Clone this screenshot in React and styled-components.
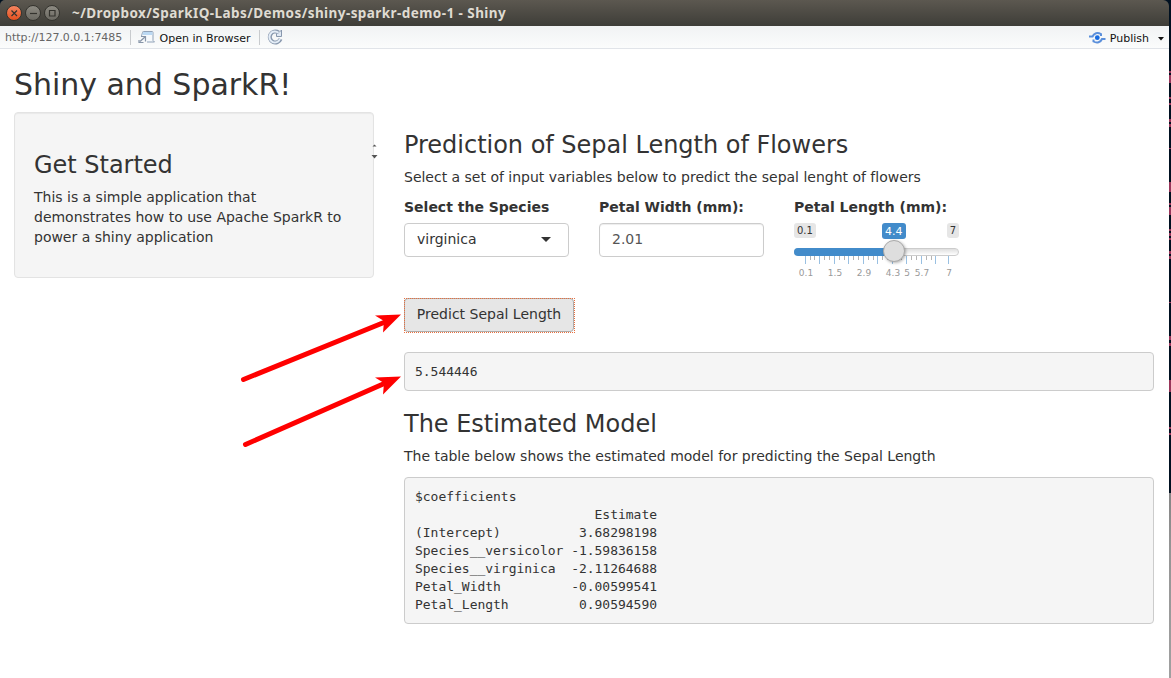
import React from 'react';
import styled, { createGlobalStyle } from 'styled-components';

const Global = createGlobalStyle`
  * { box-sizing: border-box; }
  body { margin: 0; overflow: hidden; background: #fff; }
`;

const Desktop = styled.div`
  display: flex;
  height: 678px;
  width: 1171px;
  position: relative;
  background: #001020;
  font-family: 'DejaVu Sans', sans-serif;
  font-size: 14px;
  line-height: 20px;
  color: #333;
`;

const AppWindow = styled.div`
  width: 1169px;
  height: 678px;
  display: flex;
  flex-direction: column;
`;

const Behind = styled.div`
  width: 2px;
  display: flex;
  flex-direction: column;
`;

const Editor = styled.div`
  flex: none;
  height: 493px;
`;

const Panel = styled.div`
  flex: 1;
  background: linear-gradient(#858585, #959595 30%, #a0a0a0);
`;

const TitleBar = styled.header`
  height: 26px;
  flex: none;
  display: flex;
  align-items: center;
  padding-left: 6px;
  background: linear-gradient(#5c5850, #3e3d38);
  border-radius: 5px 6px 0 0;
`;

const WindowButton = styled.span`
  width: 16px;
  height: 16px;
  margin-right: 3px;
  border-radius: 50%;
  display: flex;
  border: 1px solid #35342f;
  background: ${(p) => (p.$close ? 'linear-gradient(#f58560, #e4501f)' : 'linear-gradient(#8d8a82, #6b6962)')};
`;

const WindowTitle = styled.h1`
  margin: 0 0 0 9px;
  font: bold 13.5px/26px 'Noto Sans', sans-serif;
  letter-spacing: 0.43px;
  color: #dfdbd2;
  white-space: nowrap;
`;

const Toolbar = styled.nav`
  height: 23px;
  flex: none;
  display: flex;
  align-items: center;
  padding: 0 5px;
  font-size: 11px;
  line-height: 20px;
  color: #111;
  white-space: nowrap;
  background: linear-gradient(#f1f3f4, #fbfcfc);
  border-bottom: 1px solid #e1e4e9;
`;

const Address = styled.span`
  color: #666;
  width: 125px;
  padding-top: 2px;
  letter-spacing: -0.03px;
`;

const Divider = styled.i`
  width: 1px;
  height: 15px;
  background: #c8cbce;
`;

const ToolButton = styled.span`
  display: flex;
  align-items: center;
  gap: ${(p) => p.$gap || 0}px;
  padding-left: ${(p) => p.$pad || 0}px;
  padding-right: ${(p) => p.$end || 0}px;
  margin-left: ${(p) => (p.$right ? 'auto' : 0)};
`;

const ToolLabel = styled.span`
  padding-top: 3px;
`;

const Page = styled.main`
  flex: 1;
  background: #fff;
  padding: 19px 15px 0 14px;
`;

const PageTitle = styled.h2`
  margin: 0 0 11px;
  font-size: 30px;
  font-weight: 400;
  line-height: 33px;
  letter-spacing: -0.03px;
`;

const Columns = styled.div`
  display: flex;
  align-items: flex-start;
  gap: 30px;
`;

const Well = styled.aside`
  width: 360px;
  position: relative;
  padding: 19px;
  border: 1px solid #e3e3e3;
  border-radius: 4px;
  background: #f5f5f5;
  box-shadow: inset 0 1px 1px rgba(0, 0, 0, 0.05);
`;

const Spinner = styled.svg`
  position: absolute;
  left: 356px;
  top: 30px;
`;

const Main = styled.section`
  width: 750px;
`;

const Heading = styled.h3`
  margin: 20px 0 9px;
  font-size: 24px;
  font-weight: 400;
  line-height: 26.4px;
  letter-spacing: -0.02px;
`;

const Text = styled.p`
  margin: 0 0 ${(p) => p.$gap || 11}px;
  letter-spacing: -0.01px;
`;

const Inputs = styled.div`
  display: flex;
  gap: 30px;
  height: 100.6px;
`;

const Field = styled.div`
  width: 165px;
  display: flex;
  flex-direction: column;
  gap: 6px;
`;

const Label = styled.label`
  font-weight: 700;
  white-space: nowrap;
  line-height: 20px;
`;

const Control = styled.div`
  height: 34px;
  display: flex;
  align-items: center;
  justify-content: space-between;
  padding: 0 17px 2px 12px;
  border: 1px solid #ccc;
  border-radius: 4px;
  color: ${(p) => (p.$input ? '#555' : '#333')};
  box-shadow: ${(p) => (p.$input ? 'inset 0 1px 1px rgba(0,0,0,.075)' : 'none')};
`;

const Caret = styled.i`
  border: 5px solid transparent;
  border-top-color: #333;
  border-bottom: 0;
  margin-top: 1px;
`;

const Slider = styled.div`
  display: flex;
  flex-direction: column;
  position: relative;
`;

const Badges = styled.div`
  display: flex;
  justify-content: space-between;
  height: 17px;
  align-items: flex-start;
  font-size: 10px;
  line-height: 15px;
`;

const Badge = styled.span`
  padding: 0 3px;
  height: 15px;
  border-radius: 3px;
  background: #e6e6e6;
`;

const ValueBadge = styled(Badge)`
  position: absolute;
  left: 88px;
  top: 0;
  height: 16px;
  font-size: 11px;
  line-height: 17px;
  background: #428bca;
  color: #fff;
`;

const Track = styled.div`
  height: 8px;
  margin-top: 8px;
  border: 1px solid #ccc;
  border-radius: 8px;
  background: linear-gradient(#dedede, #fff) padding-box;
`;

const Filled = styled.div`
  width: 100px;
  height: 8px;
  margin: -1px;
  border-radius: 8px 0 0 8px;
  background: #428bca;
`;

const Knob = styled.i`
  position: absolute;
  left: 89px;
  top: 17px;
  width: 22px;
  height: 22px;
  border: 1px solid #aaa;
  border-radius: 50%;
  background: #dedede;
  box-shadow: 1px 1px 3px rgba(0, 0, 0, 0.3);
`;

const Scale = styled.svg`
  display: block;
  overflow: visible;
  font: 9px 'DejaVu Sans', sans-serif;
  fill: #999;
  text-anchor: middle;
`;

const Button = styled.button`
  display: block;
  position: relative;
  width: 170px;
  height: 34px;
  padding: 0 0 2px;
  font: inherit;
  color: #333;
  white-space: nowrap;
  background: #e6e6e6;
  border: 1px solid #adadad;
  border-radius: 4px;

  &::after {
    content: '';
    position: absolute;
    inset: -1px -2px -2px -1px;
    border: 1px dotted #e8703f;
  }
`;

const Pre = styled.pre`
  margin: ${(p) => p.$top || 0}px 0 20px;
  padding: 9.5px 10px;
  font: 13px/18px 'DejaVu Sans Mono', monospace;
  letter-spacing: -0.02px;
  background: #f5f5f5;
  border: 1px solid #ccc;
  border-radius: 4px;
`;

const Overlay = styled.svg`
  position: absolute;
  inset: 0;
  pointer-events: none;
`;

const majors = [11.5, 25.5, 40.5, 54.5, 69.5, 83.5, 98.5, 112.5, 127.5, 141.5, 154.5];
const minors = [16, 20, 30, 35, 45, 50, 59, 64, 74, 79, 88, 93, 103, 107, 117, 122, 132, 137];
const tickLabels = [[12, '0.1'], [41, '1.5'], [70, '2.9'], [99, '4.3'], [113, '5'], [128, '5.7'], [155, '7']];
const edges = [
  [71, 2], [75, 8], [97, 2], [103, 2], [119, 3], [124, 3], [148, 1], [182, 10], [203, 2], [207, 8],
  [229, 2], [233, 3], [238, 2], [251, 3], [256, 3], [302, 1], [336, 4], [343, 3], [380, 12], [427, 2], [433, 2],
];

const results = `$coefficients
                       Estimate
(Intercept)          3.68298198
Species__versicolor -1.59836158
Species__virginica  -2.11264688
Petal_Width         -0.00599541
Petal_Length         0.90594590`;

const Glyph = ({ d }) => (
  <svg width="14" height="14" viewBox="0 0 14 14" fill="none" stroke="#34332e" strokeWidth="1.2">
    <path d={d} />
  </svg>
);

export default function App() {
  return (
    <Desktop>
      <Global />
      <AppWindow>
        <TitleBar>
          <WindowButton $close><Glyph d="M4.500 4.500l5.500 5.500m0-5.500l-5.500 5.500" /></WindowButton>
          <WindowButton><Glyph d="M4 7.500h7" /></WindowButton>
          <WindowButton><Glyph d="M4.500 4.500h5.500v5.500h-5.500z" /></WindowButton>
          <WindowTitle>~/Dropbox/SparkIQ-Labs/Demos/shiny-sparkr-demo-1 - Shiny</WindowTitle>
        </TitleBar>
        <Toolbar>
          <Address>http://127.0.0.1:7485</Address>
          <Divider />
          <ToolButton $pad={7} $gap={3.5} $end={8.5}>
            <svg width="18" height="14" viewBox="0 0 18 14" fill="none">
              <path d="M3.500 6L4.500 2.500q0-1 1-1h8.500q1 0 1 1V10.500l1.500 1.500H9" fill="#f6f9fc" stroke="#91a2b8" />
              <path d="M5 2h9.500v3H4.500z" fill="#bcd9f3" />
              <path d="M3 6.500h4.500v5M7.500 6.500L2 11.500M1 10v2.500h4.500" stroke="#8795a8" strokeWidth="1.2" />
            </svg>
            <ToolLabel>Open in Browser</ToolLabel>
          </ToolButton>
          <Divider />
          <ToolButton $pad={7}>
            <svg width="17" height="16" viewBox="0 0 17 16" fill="none">
              <path d="M11.500 3.500A5.500 5.500 0 1 0 13.500 10" stroke="#8797ad" strokeWidth="4" />
              <path d="M9.500 7.500V5L12 3.500L14.500 1V7.500z" fill="#dfe8f3" stroke="#8797ad" />
              <path d="M11.500 3.800A5.500 5.500 0 1 0 13 10" stroke="#e4edf7" strokeWidth="2" />
            </svg>
          </ToolButton>
          <ToolButton $right $gap={4}>
            <svg width="17" height="14" viewBox="0 0 17 14" fill="none" stroke="#5a8fdb" strokeWidth="2">
              <path d="M0 6.500H3.500C5 3 8.500 2 12 4v2M16.500 9H13C11.500 12.500 8 13.500 4.500 11.500V9.500" />
              <circle cx="8.300" cy="7.700" r="2.400" fill="#176be0" stroke="none" />
            </svg>
            <ToolLabel>Publish</ToolLabel>
            <svg width="6" height="4" style={{ marginLeft: 5, marginTop: 3 }}><path d="M0 0h6L3 3.500z" fill="#111" /></svg>
          </ToolButton>
        </Toolbar>
        <Page>
          <PageTitle>Shiny and SparkR!</PageTitle>
          <Columns>
            <Well>
              <Heading>Get Started</Heading>
              <Text>This is a simple application that demonstrates how to use Apache SparkR to power a shiny application</Text>
              <Spinner width="8" height="18" fill="#555"><path d="M1.500 3.500h4L3.500 1.500zM0.500 12h6l-3 3.500z" /></Spinner>
            </Well>
            <Main>
              <Heading>Prediction of Sepal Length of Flowers</Heading>
              <Text $gap={10}>Select a set of input variables below to predict the sepal lenght of flowers</Text>
              <Inputs>
                <Field>
                  <Label>Select the Species</Label>
                  <Control>virginica<Caret /></Control>
                </Field>
                <Field>
                  <Label>Petal Width (mm):</Label>
                  <Control $input>2.01</Control>
                </Field>
                <Field>
                  <Label>Petal Length (mm):</Label>
                  <Slider>
                    <Badges><Badge>0.1</Badge><Badge>7</Badge></Badges>
                    <ValueBadge>4.4</ValueBadge>
                    <Track><Filled /></Track>
                    <Scale width="165" height="24">
                      {minors.map((x) => <rect key={x} x={x} y="0" width="1" height="4" fill="#b5b5b5" />)}
                      {majors.map((x) => <rect key={x} x={x - 0.5} y="0" width="1" height="8" fill="#99c0e2" />)}
                      {tickLabels.map(([x, t]) => <text key={t} x={x} y="20">{t}</text>)}
                    </Scale>
                    <Knob />
                  </Slider>
                </Field>
              </Inputs>
              <Button>Predict Sepal Length</Button>
              <Pre $top={20}>5.544446</Pre>
              <Heading>The Estimated Model</Heading>
              <Text>The table below shows the estimated model for predicting the Sepal Length</Text>
              <Pre>{results}</Pre>
            </Main>
          </Columns>
        </Page>
      </AppWindow>
      <Behind>
        <Editor>
          <svg width="2" height="493" style={{ display: 'block' }}>
            {edges.map(([y, h]) => <rect key={y} x="0" y={y} width="2" height={h} fill="#98365a" />)}
          </svg>
        </Editor>
        <Panel />
      </Behind>
      <Overlay width="1171" height="678" fill="#f00" stroke="#f00">
        <path d="M243.500 379.500L390 320M245.500 444.500L390 381" strokeWidth="5" strokeLinecap="round" />
        <path d="M401 314.500L375 315.500L384 321L383 332.500zM401 376.500L375 377.500L384 383L383 394.500z" stroke="none" />
      </Overlay>
    </Desktop>
  );
}
